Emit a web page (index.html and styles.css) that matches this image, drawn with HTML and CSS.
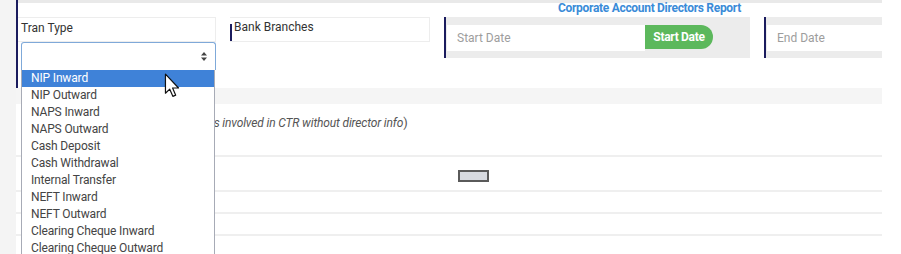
FILE: index.html
```html
<!DOCTYPE html>
<html>
<head>
  <title>Corporate Account Directors Report</title>
<meta name="viewport" content="width=device-width, initial-scale=1">
<link rel="stylesheet" href="styles.css">
</head>
<body>

<div class="page">
  <div class="gutter"></div>
  <div class="main">
    <div class="filters">
      <div class="filter tran"><!--tran type select-->
        <div class="label-box">Tran Type</div>
        <div class="select-box">
          <svg class="stepper" width="6" height="9" viewBox="0 0 6 9"><path d="M3 0 L6 3.5 L0 3.5 Z M0 5.5 L6 5.5 L3 9 Z" fill="#444"/></svg>
        </div>
      </div>
      <div class="title">Corporate Account Directors Report</div>
      <div class="filter bank">
        <div class="label-box"><span class="bar-label"><span>Bank Branches</span></span></div>
      </div>
      <div class="filter date">
        <div class="date-input">Start Date</div>
        <div class="date-btn">Start Date</div>
      </div>
      <div class="filter date end">
        <div class="date-input">End Date</div>
      </div>
    </div>
    <div class="band"></div>
    <p class="note">(Corporate Accounts involved in CTR without director info<span class="paren">)</span></p>
    <div class="rows">
      <div class="row first"><span class="mini-btn"></span></div>
      <div class="row"></div>
      <div class="row"></div>
      <div class="row"></div>
    </div>
  </div>
</div>

<!--open dropdown of the tran type select-->
<ul class="dropdown">
  <li class="selected">NIP Inward</li>
  <li>NIP Outward</li>
  <li>NAPS Inward</li>
  <li>NAPS Outward</li>
  <li>Cash Deposit</li>
  <li>Cash Withdrawal</li>
  <li>Internal Transfer</li>
  <li>NEFT Inward</li>
  <li>NEFT Outward</li>
  <li>Clearing Cheque Inward</li>
  <li>Clearing Cheque Outward</li>
</ul>

<svg class="cursor" width="16" height="25" viewBox="0 0 13 21"><path d="M1 1 L1 17 L4.6 13.6 L7.2 19.6 L9.6 18.6 L7 12.6 L12 12.6 Z" fill="#fff" stroke="#111" stroke-width="1" stroke-linejoin="round"/></svg>

  </body>
</html>
```

FILE: styles.css
```css
/*page layout*/
body {
  margin: 0;
  font-family: Roboto, Arial, Helvetica, sans-serif;
  background-color: white;
}

.page {
  display: flex;
  height: 254px;
  overflow: hidden;
}

.gutter {
  width: 16px;
  background-color: #f4f4f4;
}

.main {
  width: 866px;
  overflow: hidden;
}

/* filter bar */
.filters {
  display: grid;
  grid-template-columns: 200px 200px 306px 118px;
  grid-template-rows: 17px auto;
  column-gap: 14px;
  align-items: start;
  background: linear-gradient(#e9e9e9 3px, white 3px);
}

.filter.tran {
  grid-column: 1;
  grid-row: 1 / 3;
  border-left: 2px solid #1b1c5e;
  padding-top: 17px;
  padding-bottom: 18px;
}

.title {
  grid-column: 3 / 5;
  grid-row: 1;
  padding: 1px 0 0 114px;
  font-size: 12px;
  font-weight: bold;
  color: #3a8bd8;
  letter-spacing: -0.3px;
  white-space: nowrap;
}

.label-box {
  height: 25px;
  box-sizing: border-box;
  border: 1px solid #ededed;
  border-left: none;
  background-color: white;
  font-size: 12px;
  color: #333;
  padding: 2px 0 0 3px;
  line-height: 16px;
}

.select-box {
  margin-left: 3px;
  height: 28px;
  box-sizing: border-box;
  border: 1px solid #7fa9d9;
  border-bottom: none;
  border-radius: 3px 3px 0 0;
  display: flex;
  align-items: center;
  justify-content: flex-end;
  padding-right: 8px;
}

.filter.bank {
  grid-column: 2;
  grid-row: 2;
}

.bank .label-box {
  padding: 0;
  display: flex;
  align-items: flex-end;
}

.bar-label {
  display: block;
  border-left: 2px solid #1b1c5e;
  height: 17px;
  padding-left: 2px;
}

.bar-label span {
  display: block;
  margin-top: -5px;
  line-height: 16px;
}

.filter.date {
  grid-row: 2;
  display: flex;
  align-items: center;
  height: 41px;
  box-sizing: border-box;
  border-left: 2px solid #1b1c5e;
  background-color: #ececec;
  padding: 8px 37px 7px 1px;
}

.filter.date.end {
  padding-right: 0;
}

.date-input {
  flex: 1;
  height: 26px;
  line-height: 26px;
  background-color: white;
  font-size: 12px;
  color: #9d9d9d;
  padding-left: 10px;
}

.date-btn {
  width: 68px;
  height: 24px;
  line-height: 24px;
  margin-top: -2px;
  text-align: center;
  background-color: #5cb85c;
  color: white;
  font-size: 12px;
  font-weight: bold;
  letter-spacing: -0.3px;
  border-radius: 0 12px 12px 0;
}

/* table area */
.band {
  height: 16px;
  background-color: #f5f5f5;
}

.note {
  margin: 0;
  padding: 10px 0 0 99px;
  height: 41px;
  font-size: 12px;
  font-style: italic;
  color: #555;
  line-height: 18px;
  letter-spacing: -0.15px;
  white-space: nowrap;
}

.paren {
  font-style: normal;
  font-size: 13px;
}

.row {
  height: 20px;
  border-top: 2px solid #efefef;
}

.row.first {
  height: 33px;
  display: flex;
  align-items: center;
  padding-left: 442px;
}

.mini-btn {
  width: 27px;
  height: 8px;
  border: 2px solid #5a5a5a;
  background-color: #d7dae0;
  margin-top: 4px;
}

/* the open list */
.dropdown {
  position: absolute;
  left: 21px;
  top: 70px;
  width: 192px;
  margin: 0;
  padding: 0;
  list-style: none;
  background-color: white;
  border-left: 1px solid #a7abb6;
  border-right: 1px solid #a7abb6;
}

.dropdown li {
  height: 17px;
  line-height: 17px;
  padding-left: 9px;
  font-size: 12px;
  color: #444;
  letter-spacing: -0.15px;
}

.dropdown li.selected {
  background-color: #3f82d8;
  color: white;
}

.cursor {
  position: absolute;
  left: 164px;
  top: 73px;
}
```
